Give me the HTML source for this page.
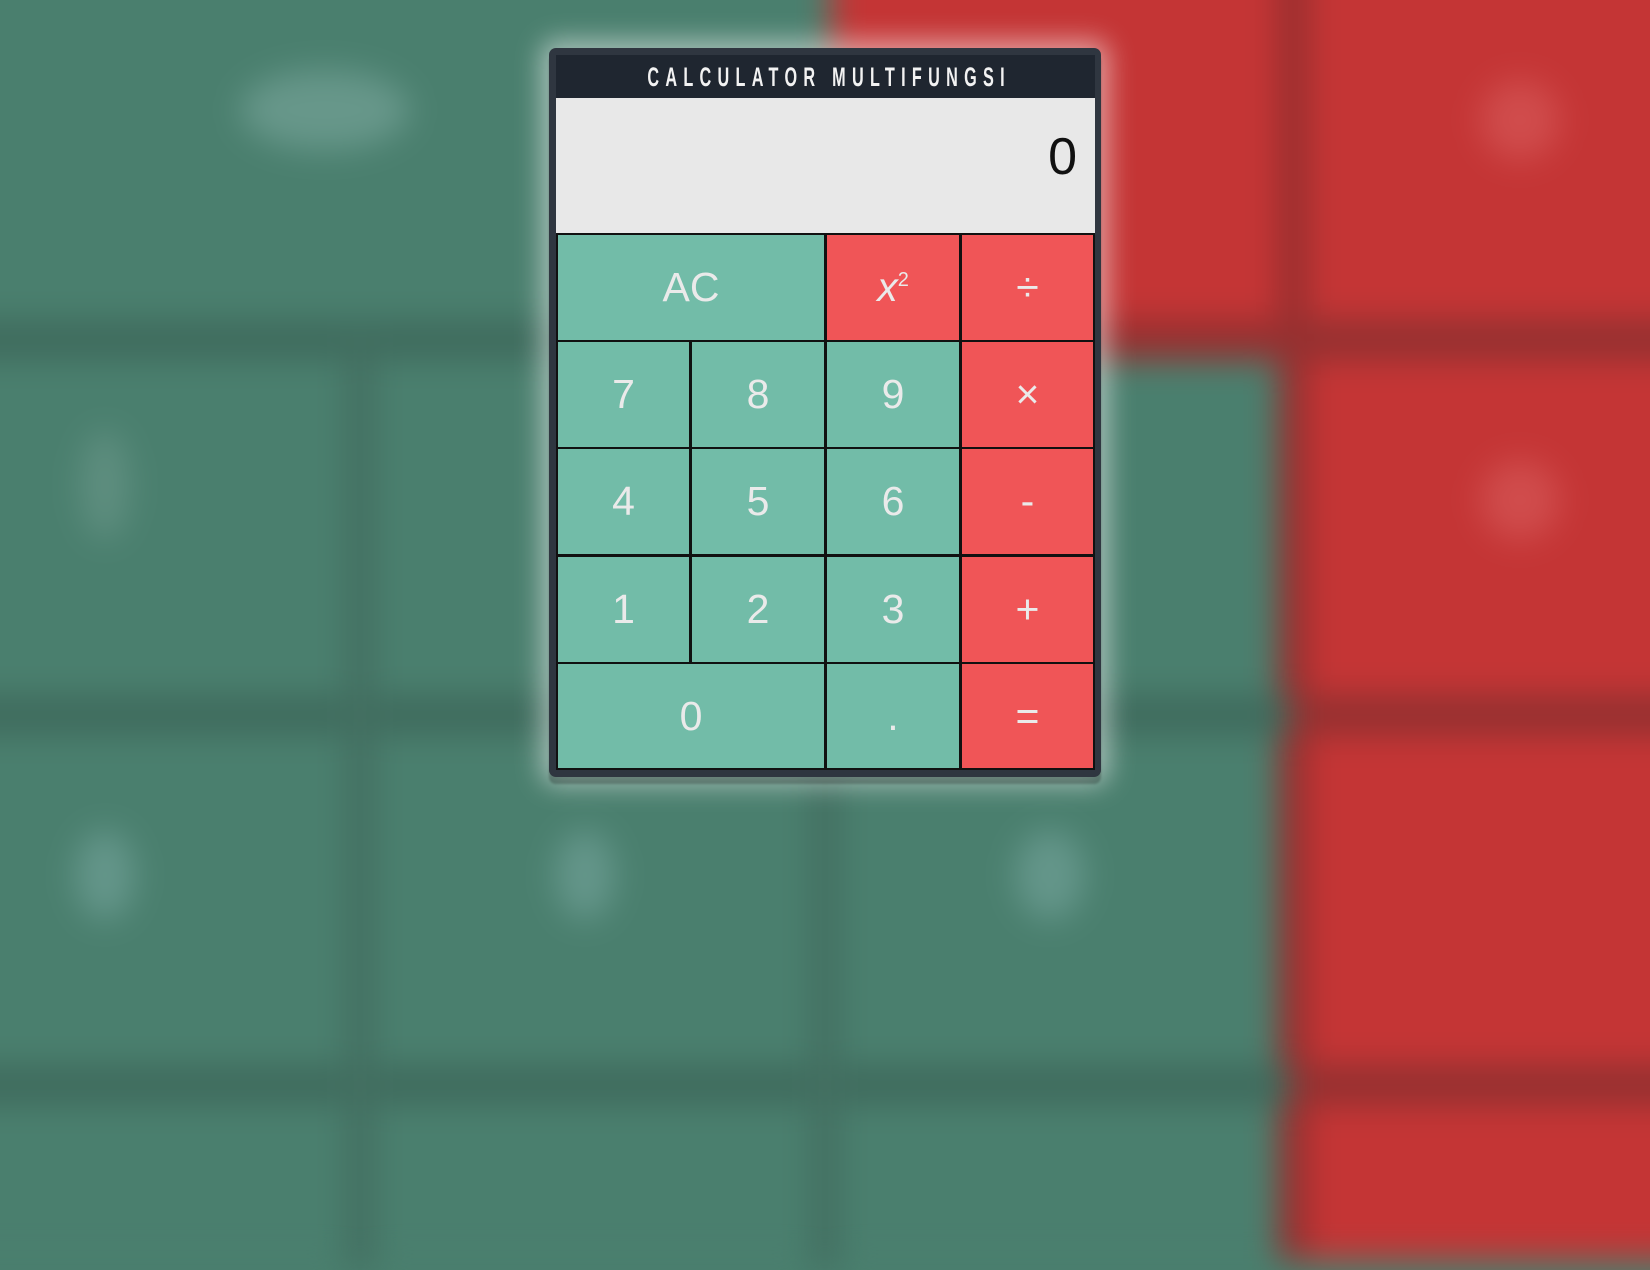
<!DOCTYPE html>
<html><head><meta charset="utf-8"><style>
html,body{margin:0;padding:0;width:1650px;height:1200px;overflow:hidden;background:#4a7f6e;font-family:"Liberation Sans",Arial,sans-serif}
.bg{position:absolute;inset:-40px;filter:blur(16px)}
.bg div{position:absolute}
.card{position:absolute;left:549px;top:48px;width:552px;height:729px;background:#2f3640;border-radius:7px;box-shadow:0 7px 2px rgba(0,0,0,.25),0 0 26px 8px rgba(255,255,255,.5)}
.title{position:absolute;left:7px;top:7px;width:539px;height:43px;background:#1f2630;color:#f2f2f2;line-height:44px;font-weight:bold;font-size:27px;white-space:nowrap;overflow:hidden}
.title span{position:absolute;left:50%;top:0;transform:translateX(-50%) scaleX(0.6);letter-spacing:10.5px;text-indent:10.5px}
.disp{position:absolute;left:7px;top:50px;width:539px;height:135px;background:#e8e8e8;color:#111;font-size:52px;text-align:right;box-sizing:border-box;padding-right:18px;line-height:118px}
.keys{position:absolute;left:7px;top:185px;width:539px;height:537px}
.k{position:absolute;box-sizing:border-box;border:2px solid #111;color:#eaeaea;font-size:41px;display:flex;align-items:center;justify-content:center}
.g{background:#72bca8}.r{background:#f05557}
</style></head><body>
<div class="bg">
 <div style="left:0;top:0;width:1800px;height:1300px;background:#4a7f6e"></div>
 <div style="left:871px;top:0;width:470px;height:380px;background:#c43535"></div>
 <div style="left:1334px;top:0;width:400px;height:1300px;background:#c43535"></div>
 <div style="left:1318px;top:0;width:30px;height:1300px;background:#962e2e"></div>
 <div style="left:0;top:360px;width:1330px;height:40px;background:#3f6b5d"></div>
 <div style="left:871px;top:360px;width:460px;height:40px;background:#963030"></div>
 <div style="left:1334px;top:360px;width:400px;height:40px;background:#943030"></div>
 <div style="left:0;top:735px;width:1330px;height:40px;background:#3f6b5d"></div>
 <div style="left:1334px;top:735px;width:400px;height:40px;background:#943030"></div>
 <div style="left:0;top:1105px;width:1330px;height:40px;background:#3f6b5d"></div>
 <div style="left:1334px;top:1105px;width:400px;height:40px;background:#943030"></div>
 <div style="left:385px;top:380px;width:30px;height:930px;background:#436f61"></div>
 <div style="left:850px;top:380px;width:30px;height:930px;background:#436f61"></div>
 <div style="left:280px;top:110px;width:170px;height:80px;background:#67978a;border-radius:50%"></div>
 <div style="left:120px;top:470px;width:50px;height:110px;background:#5e8e7f;border-radius:50%"></div>
 <div style="left:115px;top:870px;width:60px;height:90px;background:#64968a;border-radius:50%"></div>
 <div style="left:595px;top:870px;width:60px;height:90px;background:#64968a;border-radius:50%"></div>
 <div style="left:1055px;top:870px;width:70px;height:90px;background:#64968a;border-radius:50%"></div>
 <div style="left:1520px;top:120px;width:80px;height:80px;background:#d04c4c;border-radius:50%"></div>
 <div style="left:1520px;top:500px;width:80px;height:80px;background:#d04c4c;border-radius:50%"></div>
</div>
<div class="card">
 <div class="title"><span>CALCULATOR MULTIFUNGSI</span></div>
 <div class="disp">0</div>
 <div class="keys">
  <div class="k g" style="left:0;top:0;width:270px;height:109px">AC</div>
  <div class="k r" style="left:269px;top:0;width:136px;height:109px"><i>x</i><sup style="font-size:20px;margin-top:-14px">2</sup></div>
  <div class="k r" style="left:404px;top:0;width:135px;height:109px">÷</div>
  <div class="k g" style="left:0;top:107px;width:135px;height:109px">7</div>
  <div class="k g" style="left:134px;top:107px;width:136px;height:109px">8</div>
  <div class="k g" style="left:269px;top:107px;width:136px;height:109px">9</div>
  <div class="k r" style="left:404px;top:107px;width:135px;height:109px">×</div>
  <div class="k g" style="left:0;top:214px;width:135px;height:109px">4</div>
  <div class="k g" style="left:134px;top:214px;width:136px;height:109px">5</div>
  <div class="k g" style="left:269px;top:214px;width:136px;height:109px">6</div>
  <div class="k r" style="left:404px;top:214px;width:135px;height:109px">-</div>
  <div class="k g" style="left:0;top:322px;width:135px;height:109px">1</div>
  <div class="k g" style="left:134px;top:322px;width:136px;height:109px">2</div>
  <div class="k g" style="left:269px;top:322px;width:136px;height:109px">3</div>
  <div class="k r" style="left:404px;top:322px;width:135px;height:109px">+</div>
  <div class="k g" style="left:0;top:429px;width:270px;height:108px">0</div>
  <div class="k g" style="left:269px;top:429px;width:136px;height:108px">.</div>
  <div class="k r" style="left:404px;top:429px;width:135px;height:108px">=</div>
 </div>
</div>
</body></html>
